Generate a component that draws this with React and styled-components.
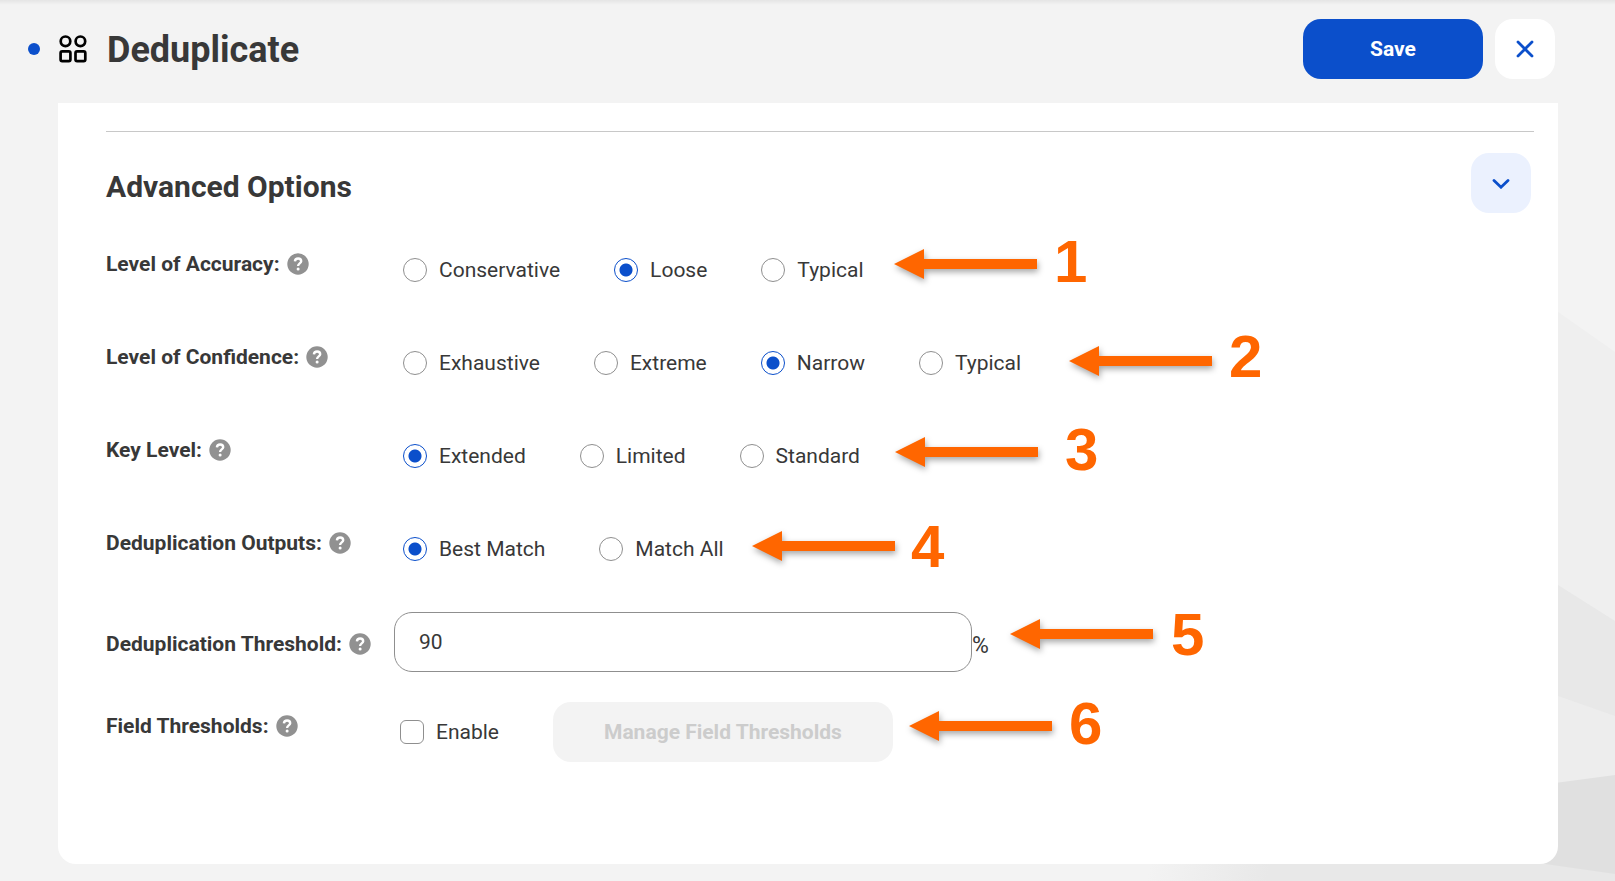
import React, { useState } from "react";
import styled, { createGlobalStyle } from "styled-components";

const colors = {
  blue: "#0b4fcb",
  lightBlue: "#ebf1fe",
  page: "#f3f3f3",
  text: "#383838",
  border: "#8f8f8f",
  line: "#c8c8c8",
  help: "#919191",
  disabled: "#cccccc",
  orange: "#ff6600",
};

const GlobalStyle = createGlobalStyle`
  * {
    box-sizing: border-box;
  }
  body {
    margin: 0;
    background: ${colors.page};
    color: ${colors.text};
    font-family: Roboto, "Liberation Sans", sans-serif;
    font-size: 21px;
    line-height: 24px;
  }
  button, input {
    font: inherit;
    color: inherit;
    margin: 0;
  }
`;

const Page = styled.div`
  position: relative;
  min-height: 100vh;
  padding: 0 57px 17px 28px;
  display: flex;
  flex-direction: column;
  background: linear-gradient(rgba(0, 0, 0, 0.06), transparent 5px);
`;

const Backdrop = styled.svg`
  position: absolute;
  right: 0;
  bottom: 0;
  z-index: -1;
`;

const Header = styled.header`
  display: flex;
  align-items: center;
  padding: 19px 3px 24px 0;
`;

const Dot = styled.span`
  width: 12px;
  height: 12px;
  border-radius: 50%;
  background: ${colors.blue};
  margin-right: 19px;
`;

const Title = styled.h1`
  flex: 1;
  margin: 0 0 0 20px;
  padding-top: 2px;
  font-size: 36px;
  line-height: 42px;
  font-weight: 700;
`;

const Button = styled.button`
  height: 60px;
  border: 0;
  border-radius: 18px;
  padding: 0 ${(props) => props.$padding || 0}px;
  min-width: ${(props) => props.$width || 60}px;
  background: ${(props) => props.$background};
  color: ${(props) => props.$color};
  font-weight: 700;
  display: flex;
  align-items: center;
  justify-content: center;
  cursor: pointer;
  &:disabled {
    cursor: default;
  }
`;

const Actions = styled.div`
  display: flex;
  gap: 12px;
`;

const Card = styled.main`
  position: relative;
  flex: 1;
  margin-left: 30px;
  padding: 28px 24px 24px 48px;
  background: #ffffff;
  border-radius: 0 0 18px 18px;
`;

const SectionHead = styled.div`
  display: flex;
  align-items: center;
  justify-content: space-between;
  border-top: 1px solid ${colors.line};
  padding: 21px 3px 0 0;
`;

const SectionTitle = styled.h2`
  margin: 0;
  padding-top: 7px;
  font-size: 30px;
  line-height: 36px;
  font-weight: 700;
`;

const Row = styled.div`
  display: flex;
  align-items: flex-start;
  min-height: ${(props) => props.$height || 93}px;
`;

const Rows = styled.form`
  padding-top: 39px;
`;

const RowLabel = styled.div`
  display: flex;
  align-items: center;
  gap: 7px;
  width: ${(props) => props.$width || 297}px;
  padding-top: ${(props) => props.$top || 0}px;
  font-weight: 700;
  white-space: nowrap;
`;

const Options = styled.div`
  display: flex;
  gap: 54px;
  padding-top: 6px;
`;

const Option = styled.label`
  display: flex;
  align-items: center;
  gap: 12px;
`;

const Radio = styled.input`
  appearance: none;
  width: 24px;
  height: 24px;
  border: 1px solid ${colors.border};
  border-radius: 50%;
  background: #ffffff;
  &:checked {
    border-color: ${colors.blue};
    background: radial-gradient(circle, ${colors.blue} 6px, #ffffff 7px);
  }
`;

const Checkbox = styled.input`
  appearance: none;
  width: 24px;
  height: 24px;
  border: 1px solid ${colors.border};
  border-radius: 6px;
  background: #ffffff;
  &:checked {
    background: ${colors.blue};
  }
`;

const FieldOptions = styled.div`
  display: flex;
  align-items: center;
  gap: 54px;
`;

const ThresholdInput = styled.input`
  width: 578px;
  height: 60px;
  padding: 0 24px;
  border: 1px solid ${colors.border};
  border-radius: 18px;
  background: #ffffff;
  outline: none;
`;

const Percent = styled.span`
  padding-top: 22px;
  font-size: 23px;
`;

const Arrow = styled.svg`
  position: absolute;
  left: ${(props) => props.$x}px;
  top: ${(props) => props.$y}px;
  filter: drop-shadow(1px 3px 3px rgba(0, 0, 0, 0.35));
  overflow: visible;
`;

const Number = styled.span`
  position: absolute;
  left: ${(props) => props.$x}px;
  top: ${(props) => props.$y}px;
  color: ${colors.orange};
  font-family: "Liberation Sans", Arial, sans-serif;
  font-size: 60px;
  line-height: 60px;
  font-weight: 700;
`;

const radioRows = [
  {
    name: "accuracy",
    label: "Level of Accuracy:",
    options: ["Conservative", "Loose", "Typical"],
    value: "Loose",
  },
  {
    name: "confidence",
    label: "Level of Confidence:",
    options: ["Exhaustive", "Extreme", "Narrow", "Typical"],
    value: "Narrow",
  },
  {
    name: "keyLevel",
    label: "Key Level:",
    options: ["Extended", "Limited", "Standard"],
    value: "Extended",
  },
  {
    name: "outputs",
    label: "Deduplication Outputs:",
    options: ["Best Match", "Match All"],
    value: "Best Match",
    height: 81,
  },
];

// positions are measured from the top left corner of the card
const callouts = [
  { arrow: [836, 146], number: [996, 129] },
  { arrow: [1011, 243], number: [1171, 224] },
  { arrow: [837, 334], number: [1007, 317] },
  { arrow: [694, 428], number: [853, 414] },
  { arrow: [952, 516], number: [1113, 502] },
  { arrow: [851, 608], number: [1011, 591] },
];

const HelpIcon = () => (
  <svg width="22" height="22" viewBox="0 0 22 22" aria-hidden="true">
    <circle cx="11" cy="11" r="10.7" fill={colors.help} />
    <path
      d="M7.9 8.3C8.2 4.5 14.2 4.7 14.2 8.2C14.2 10.4 11.1 10.4 11.1 12.9"
      fill="none"
      stroke="#fff"
      strokeWidth="2.4"
    />
    <circle cx="11.1" cy="16.1" r="1.5" fill="#fff" />
  </svg>
);

const RadioRow = ({ name, label, options, value, height }) => {
  const [selected, setSelected] = useState(value);
  return (
    <Row $height={height} role="radiogroup" aria-labelledby={`${name}-label`}>
      <RowLabel>
        <span id={`${name}-label`}>{label}</span>
        <HelpIcon />
      </RowLabel>
      <Options>
        {options.map((option) => (
          <Option key={option}>
            <Radio
              type="radio"
              name={name}
              checked={selected === option}
              onChange={() => setSelected(option)}
            />
            {option}
          </Option>
        ))}
      </Options>
    </Row>
  );
};

const App = () => {
  const [threshold, setThreshold] = useState("90");
  const [enabled, setEnabled] = useState(false);

  return (
    <Page>
      <GlobalStyle />
      <Backdrop width="515" height="601" viewBox="0 0 515 601" aria-hidden="true">
        <defs>
          <linearGradient id="floor" gradientUnits="userSpaceOnUse" x1="50" y1="584" x2="165" y2="610">
            <stop offset="0" stopColor="#f3f3f3" />
            <stop offset="1" stopColor="#e8e8e8" />
          </linearGradient>
        </defs>
        <path fill="#efefef" d="M458 32 515 72V601H458z" />
        <path fill="#e8e8e8" d="M458 305 515 341V601H458z" />
        <path fill="#ededed" d="M458 416 515 436V601H458z" />
        <path fill="#e0e0e0" d="M440 505 515 495V595L440 584z" />
        <path fill="url(#floor)" d="M30 584H445L515 594V601H30z" />
      </Backdrop>
      <Header>
        <Dot />
        <svg width="28" height="28" viewBox="0 0 28 28" fill="none" stroke="#000" strokeWidth="2.7" aria-hidden="true">
          <circle cx="6.5" cy="6.3" r="4.8" />
          <circle cx="21.4" cy="6.3" r="4.8" />
          <rect x="1.6" y="16.4" width="9.8" height="9.8" rx="1.6" />
          <rect x="16.5" y="16.4" width="9.8" height="9.8" rx="1.6" />
        </svg>
        <Title>Deduplicate</Title>
        <Actions>
          <Button type="button" $width={180} $background={colors.blue} $color="#ffffff">
            Save
          </Button>
          <Button type="button" aria-label="Close" $background="#ffffff" $color={colors.blue}>
            <svg width="18" height="18" viewBox="0 0 18 18" fill="none" stroke="currentColor" strokeWidth="2.8" strokeLinecap="round">
              <path d="M2 2 16 16M16 2 2 16" />
            </svg>
          </Button>
        </Actions>
      </Header>
      <Card>
        <SectionHead>
          <SectionTitle>Advanced Options</SectionTitle>
          <Button type="button" aria-label="Collapse" $background={colors.lightBlue} $color={colors.blue}>
            <svg width="18" height="12" viewBox="0 0 18 12" fill="none" stroke="currentColor" strokeWidth="2.8" strokeLinecap="round">
              <path d="M2 3.4 9 10.2 16 3.4" />
            </svg>
          </Button>
        </SectionHead>
        <Rows>
          {radioRows.map((row) => (
            <RadioRow key={row.name} {...row} />
          ))}
          <Row $height={90}>
            <RowLabel $width={288} $top={20}>
              <label htmlFor="threshold">Deduplication Threshold:</label>
              <HelpIcon />
            </RowLabel>
            <ThresholdInput
              id="threshold"
              type="text"
              value={threshold}
              onChange={(e) => setThreshold(e.target.value)}
            />
            <Percent>%</Percent>
          </Row>
          <Row $height={60}>
            <RowLabel $width={294} $top={12}>
              Field Thresholds:
              <HelpIcon />
            </RowLabel>
            <FieldOptions>
              <Option>
                <Checkbox
                  type="checkbox"
                  checked={enabled}
                  onChange={(e) => setEnabled(e.target.checked)}
                />
                Enable
              </Option>
              <Button
                type="button"
                disabled={!enabled}
                $padding={51}
                $background={colors.page}
                $color={colors.disabled}
              >
                Manage Field Thresholds
              </Button>
            </FieldOptions>
          </Row>
        </Rows>
        {callouts.map(({ arrow, number }, i) => (
          <React.Fragment key={i}>
            <Arrow width="143" height="30" $x={arrow[0]} $y={arrow[1]} aria-hidden="true">
              <path fill={colors.orange} d="M0 15 30 0V10H143V20H30V30z" />
            </Arrow>
            <Number $x={number[0]} $y={number[1]}>
              {i + 1}
            </Number>
          </React.Fragment>
        ))}
      </Card>
    </Page>
  );
};

export default App;
